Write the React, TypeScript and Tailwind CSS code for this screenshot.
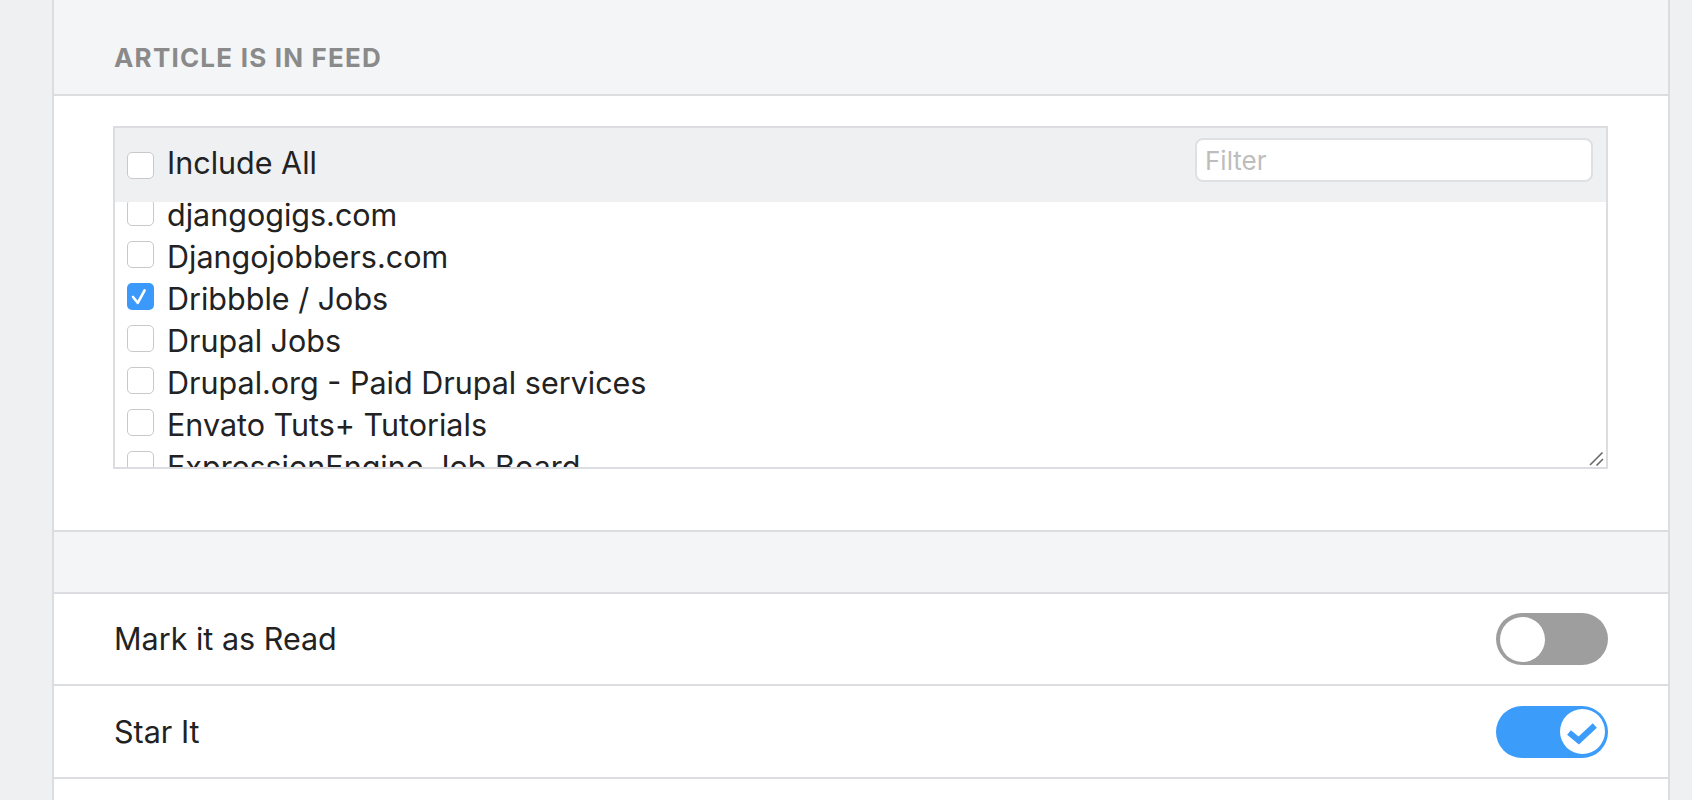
import React from 'react';

const feeds = [
  { name: 'djangogigs.com', checked: false },
  { name: 'Djangojobbers.com', checked: false },
  { name: 'Dribbble / Jobs', checked: true },
  { name: 'Drupal Jobs', checked: false },
  { name: 'Drupal.org - Paid Drupal services', checked: false },
  { name: 'Envato Tuts+ Tutorials', checked: false },
  { name: 'ExpressionEngine Job Board', checked: false },
  { name: 'Fiverr', checked: false },
];

function Box({ checked, className = '' }: { checked?: boolean; className?: string }) {
  if (checked) {
    return (
      <span className={`flex h-[27px] w-[27px] shrink-0 items-center justify-center rounded-[5px] bg-[#3b99fc] ${className}`}>
        <svg width="27" height="27" viewBox="0 0 27 27">
          <path d="M6 14 L10.8 19.8 L17.6 7.4" fill="none" stroke="#fff" strokeWidth="2.6" strokeLinecap="round" strokeLinejoin="round" />
        </svg>
      </span>
    );
  }
  return <span className={`block h-[27px] w-[27px] shrink-0 rounded-[5px] border-[1.5px] border-[#c9c9cb] bg-white ${className}`} />;
}

function Toggle({ on }: { on?: boolean }) {
  return (
    <div
      className={`flex h-[52px] w-[112px] items-center rounded-full px-[3.5px] ${
        on ? 'justify-end bg-[#3c9cfa]' : 'justify-start bg-[#9e9e9e]'
      }`}
    >
      <span className="flex h-[45px] w-[45px] items-center justify-center rounded-full bg-white">
        {on && (
          <svg width="45" height="45" viewBox="0 0 45 45">
            <path d="M9 23.5 L18.8 31.5 L34.8 16.5" fill="none" stroke="#3c9cfa" strokeWidth="6" strokeLinejoin="miter" />
          </svg>
        )}
      </span>
    </div>
  );
}

export default function App() {
  return (
    <div className="min-h-[800px] w-full bg-[#eff0f2] font-['Inter',sans-serif] text-[#222]">
      <div className="ml-[52px] min-h-[800px] w-[1618px] border-x-2 border-[#dcdde0] bg-white">
        <div className="h-[96px] border-b-2 border-[#dcdde0] bg-[#f4f5f7] pl-[60px] pt-[42px]">
          <h2 className="text-[26px] font-bold uppercase leading-[32px] tracking-[1.2px] text-[#8a8a8a]">Article is in feed</h2>
        </div>

        <div className="h-[436px] border-b-2 border-[#dcdde0] pl-[59px] pr-[60px] pt-[30px]">
          <div className="relative border-2 border-[#dcdde0]">
            <div className="flex h-[74px] items-start justify-between bg-[#eff0f2] pl-[12px] pr-[13px]">
              <label className="flex items-start gap-[13px]">
                <Box className="mt-[24px]" />
                <span className="mt-[17px] text-[30.5px] leading-[36px]">Include All</span>
              </label>
              <input
                placeholder="Filter"
                className="mt-[10px] h-[44px] w-[398px] rounded-[8px] border-2 border-[#dfe0e3] bg-white px-[8px] text-[26px] outline-none placeholder:text-[#bdbdbd]"
              />
            </div>
            <div className="h-[265px] overflow-hidden">
              <ul className="-mt-[5px] pl-[12px]">
                {feeds.map((f) => (
                  <li key={f.name} className="flex h-[42px] items-start gap-[13px]">
                    <Box checked={f.checked} className="mt-[2px]" />
                    <span className="whitespace-nowrap text-[30.5px] leading-[36px]">{f.name}</span>
                  </li>
                ))}
              </ul>
            </div>
            <svg className="absolute bottom-[1px] right-[2px]" width="16" height="16" viewBox="0 0 16 16">
              <path d="M2 15 L14.5 2.5 M8.5 15.5 L15 9" stroke="#6b6b6b" strokeWidth="1.6" />
            </svg>
          </div>
        </div>

        <div className="h-[62px] border-b-2 border-[#dcdde0] bg-[#f4f5f7]" />

        <div className="flex h-[92px] items-center justify-between border-b-2 border-[#dcdde0] px-[60px]">
          <span className="text-[30.5px] leading-[36px]">Mark it as Read</span>
          <Toggle />
        </div>
        <div className="flex h-[93px] items-center justify-between border-b-2 border-[#dcdde0] px-[60px]">
          <span className="text-[30.5px] leading-[36px]">Star It</span>
          <Toggle on />
        </div>
      </div>
    </div>
  );
}
